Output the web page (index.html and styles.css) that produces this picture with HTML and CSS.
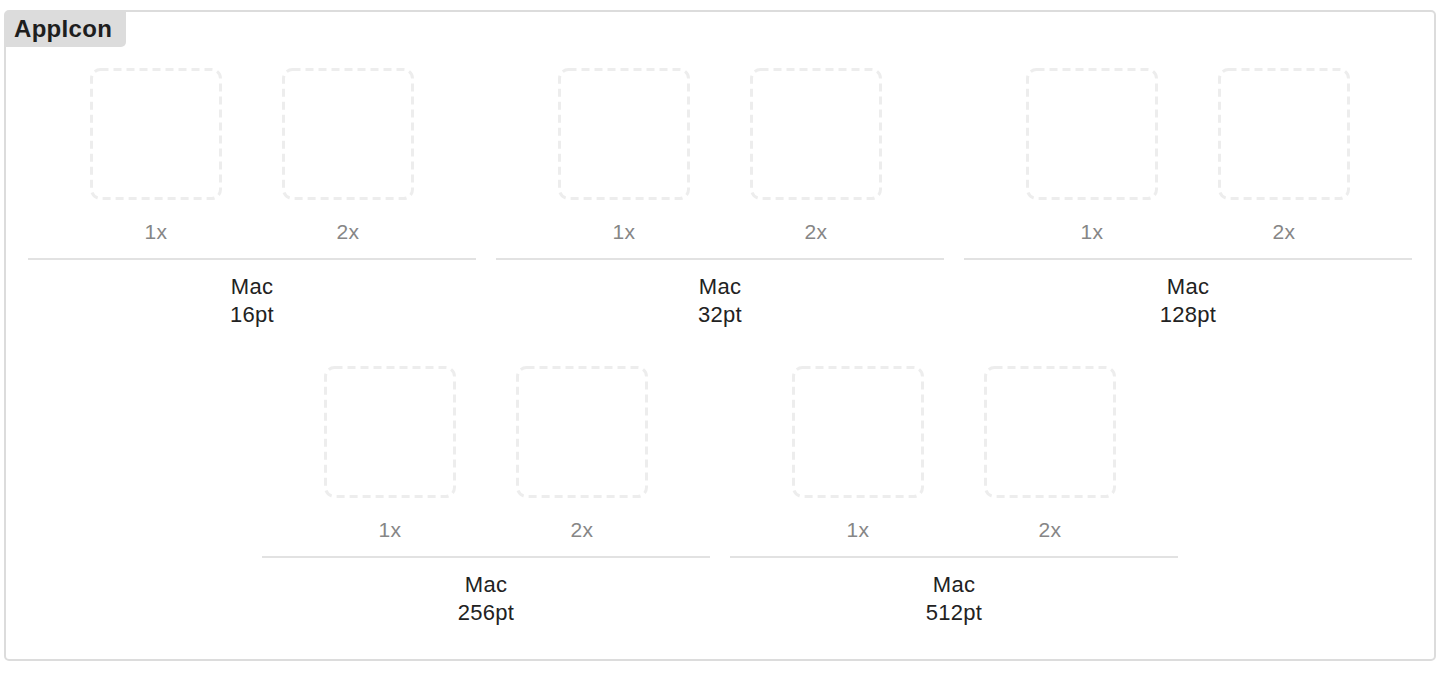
FILE: index.html
```html
<!DOCTYPE html>
<html>
<head>
<meta charset="utf-8">
<link rel="stylesheet" href="styles.css">
</head>
<body>
<div class="panel">
  <div class="tab">AppIcon</div>
  <div class="rows">
    <div class="row">
      <div class="group">
        <div class="pair">
          <div class="slot"><svg class="well" width="132" height="132" viewBox="0 0 132 132"><rect x="1.5" y="1.5" width="129" height="129" rx="9"/></svg><div class="scale">1x</div></div>
          <div class="slot"><svg class="well" width="132" height="132" viewBox="0 0 132 132"><rect x="1.5" y="1.5" width="129" height="129" rx="9"/></svg><div class="scale">2x</div></div>
        </div>
        <div class="rule"></div>
        <div class="name">Mac<br>16pt</div>
      </div>
      <div class="group">
        <div class="pair">
          <div class="slot"><svg class="well" width="132" height="132" viewBox="0 0 132 132"><rect x="1.5" y="1.5" width="129" height="129" rx="9"/></svg><div class="scale">1x</div></div>
          <div class="slot"><svg class="well" width="132" height="132" viewBox="0 0 132 132"><rect x="1.5" y="1.5" width="129" height="129" rx="9"/></svg><div class="scale">2x</div></div>
        </div>
        <div class="rule"></div>
        <div class="name">Mac<br>32pt</div>
      </div>
      <div class="group">
        <div class="pair">
          <div class="slot"><svg class="well" width="132" height="132" viewBox="0 0 132 132"><rect x="1.5" y="1.5" width="129" height="129" rx="9"/></svg><div class="scale">1x</div></div>
          <div class="slot"><svg class="well" width="132" height="132" viewBox="0 0 132 132"><rect x="1.5" y="1.5" width="129" height="129" rx="9"/></svg><div class="scale">2x</div></div>
        </div>
        <div class="rule"></div>
        <div class="name">Mac<br>128pt</div>
      </div>
    </div>
    <div class="row">
      <div class="group">
        <div class="pair">
          <div class="slot"><svg class="well" width="132" height="132" viewBox="0 0 132 132"><rect x="1.5" y="1.5" width="129" height="129" rx="9"/></svg><div class="scale">1x</div></div>
          <div class="slot"><svg class="well" width="132" height="132" viewBox="0 0 132 132"><rect x="1.5" y="1.5" width="129" height="129" rx="9"/></svg><div class="scale">2x</div></div>
        </div>
        <div class="rule"></div>
        <div class="name">Mac<br>256pt</div>
      </div>
      <div class="group">
        <div class="pair">
          <div class="slot"><svg class="well" width="132" height="132" viewBox="0 0 132 132"><rect x="1.5" y="1.5" width="129" height="129" rx="9"/></svg><div class="scale">1x</div></div>
          <div class="slot"><svg class="well" width="132" height="132" viewBox="0 0 132 132"><rect x="1.5" y="1.5" width="129" height="129" rx="9"/></svg><div class="scale">2x</div></div>
        </div>
        <div class="rule"></div>
        <div class="name">Mac<br>512pt</div>
      </div>
    </div>
  </div>
</div>
</body>
</html>
```
FILE: styles.css
```css
* { box-sizing: border-box; }
html, body { margin: 0; padding: 0; background: #fff; }
body {
  font-family: "Liberation Sans", Arial, Helvetica, sans-serif;
  color: #222;
}
.panel {
  margin: 10px 8px 0 4px;
  height: 651px;
  border: 2px solid #dcdcdc;
  border-radius: 5px;
  display: flex;
  flex-direction: column;
  align-items: flex-start;
}
.tab {
  background: #dcdcdc;
  font-weight: bold;
  font-size: 24px;
  line-height: 34px;
  height: 35px;
  padding: 0 14px 0 8px;
  color: #1e1e1e;
  border-bottom-right-radius: 5px;
  letter-spacing: 0.3px;
}
.rows {
  align-self: stretch;
  padding: 21px 22px 0 22px;
  display: flex;
  flex-direction: column;
  gap: 37px;
}
.row {
  display: flex;
  justify-content: center;
  gap: 20px;
}
.group {
  width: 448px;
  display: flex;
  flex-direction: column;
  align-items: stretch;
}
.pair {
  display: flex;
  justify-content: center;
  gap: 60px;
}
.slot {
  width: 132px;
  display: flex;
  flex-direction: column;
  align-items: center;
}
.well { display: block; }
.well rect {
  fill: none;
  stroke: #ededed;
  stroke-width: 3;
  stroke-dasharray: 8 5;
}
.scale {
  margin-top: 20px;
  font-size: 21px;
  line-height: 24px;
  height: 24px;
  color: #868686;
  letter-spacing: 0.5px;
}
.rule {
  margin-top: 14px;
  height: 2px;
  background: #e2e2e2;
}
.name {
  margin-top: 13px;
  text-align: center;
  font-size: 22px;
  line-height: 28px;
  letter-spacing: 0.3px;
  color: #222;
}
```
